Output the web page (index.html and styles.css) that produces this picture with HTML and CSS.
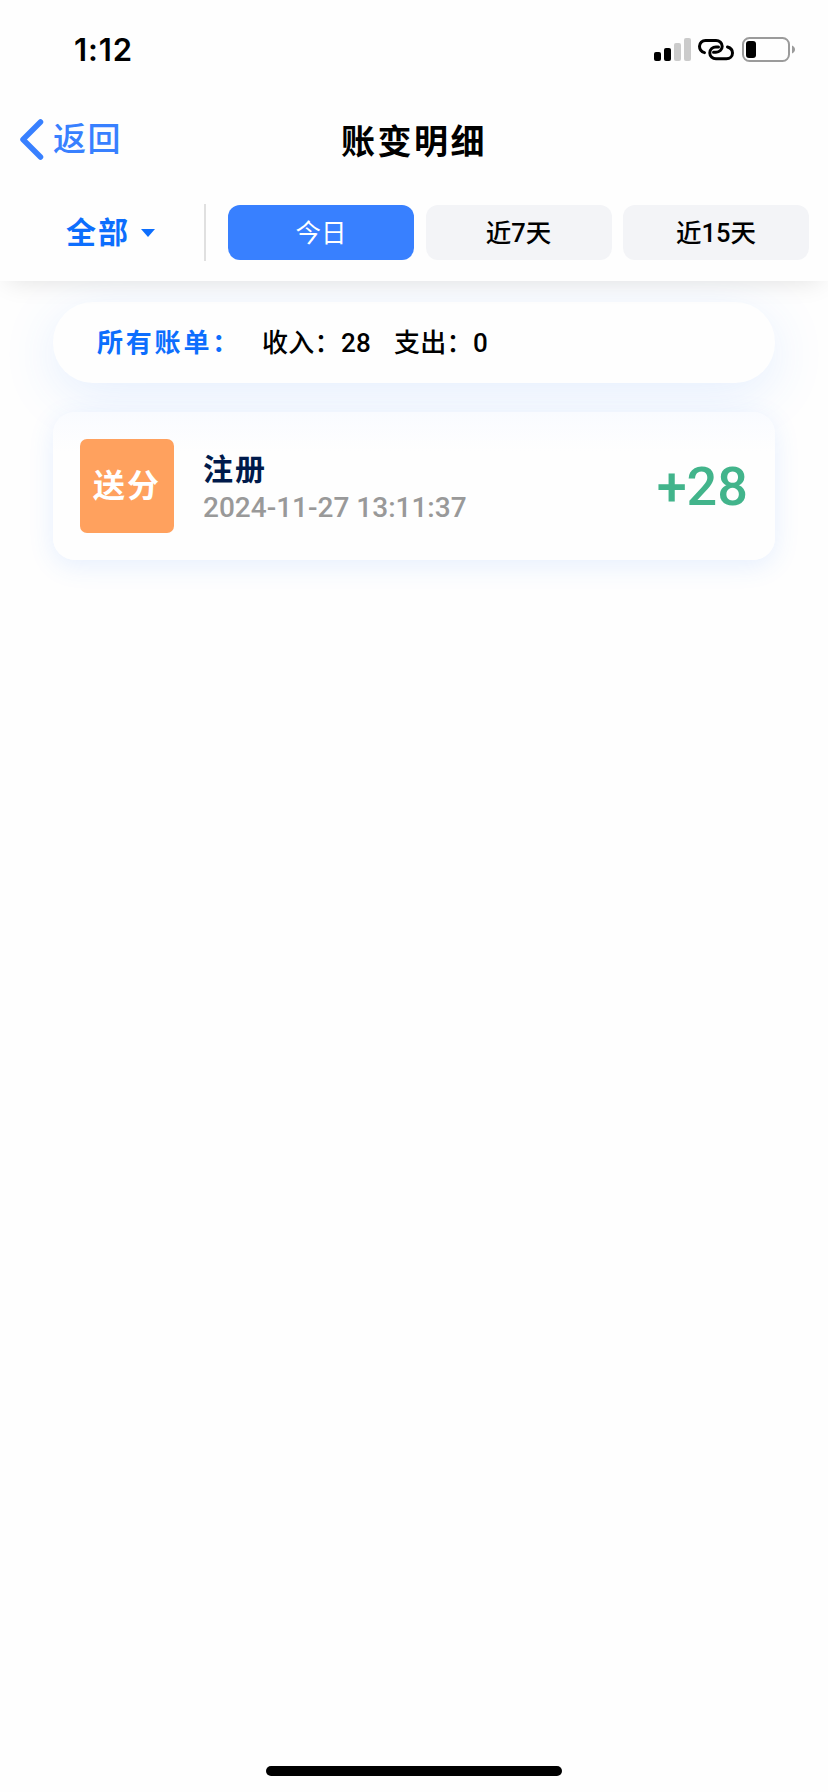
FILE: index.html
```html
<!DOCTYPE html>
<html lang="zh-CN">
<head>
    <meta charset="UTF-8">
    <meta name="viewport" content="width=device-width, initial-scale=1.0">
    <title>账变明细</title>
    <link rel="stylesheet" href="styles.css">
</head>
<body>
    <div class="page">
        <header class="header">
            <div class="status-bar">
                <span class="time">1:12</span>
                <svg class="status-icons" width="144" height="30" viewBox="0 0 144 30">
                    <!-- signal -->
                    <rect x="3" y="17" width="7" height="9" rx="2"/>
                    <rect x="13" y="13" width="7" height="13" rx="2"/>
                    <rect x="23" y="8" width="7" height="18" rx="2" fill="#cbcbcb"/>
                    <rect x="33" y="3" width="7" height="23" rx="2" fill="#cbcbcb"/>
                    <!-- hotspot link -->
                    <g fill="none" stroke="#000" stroke-width="3" stroke-linecap="round">
                        <path d="M53.5 17.6C50.5 16.8 48.5 14.2 48.5 11.3C48.5 8 51.3 5.4 54.6 5.4H65C68.4 5.4 71.2 8 71.2 11.3C71.2 14.6 68.4 17.2 65 17.2H62.5"/>
                        <path d="M76.5 12C79.5 12.8 81.5 15.2 81.5 18C81.5 21.4 78.7 23.8 75.4 23.8H65C61.6 23.8 58.8 21.4 58.8 18C58.8 14.4 61.6 12 65 12H67.5"/>
                    </g>
                    <!-- battery -->
                    <rect x="92" y="3" width="46" height="23" rx="6.5" fill="none" stroke="#9b9b9b" stroke-width="2"/>
                    <rect x="95" y="6" width="10" height="17" rx="3"/>
                    <path d="M141 10.5C145 12 145 17 141 18.5Z" fill="#9b9b9b"/>
                </svg>
            </div>
            <div class="nav">
                <a class="back">
                    <svg width="26" height="44" viewBox="0 0 26 44">
                        <path d="M22.5 4L5 21.5L22.5 39" fill="none" stroke="#3880ff" stroke-width="5.5" stroke-linecap="round" stroke-linejoin="round"/>
                    </svg>
                    <span>返回</span>
                </a>
                <h1 class="title">账变明细</h1>
            </div>
            <div class="filters">
                <div class="type">
                    <span>全部</span>
                    <i class="caret"></i>
                </div>
                <div class="days">
                    <button class="day active">今日</button>
                    <button class="day">近7天</button>
                    <button class="day">近15天</button>
                </div>
            </div>
        </header>

        <main class="content">
            <div class="summary">
                <span class="label">所有账单：</span>
                <span class="income">收入：28</span>
                <span class="outcome">支出：0</span>
            </div>
            <div class="record">
                <div class="tag">送分</div>
                <div class="info">
                    <div class="name">注册</div>
                    <div class="date">2024-11-27 13:11:37</div>
                </div>
                <div class="amount">+28</div>
            </div>
        </main>

        <div class="home-bar"></div>
    </div>
</body>
</html>
```

FILE: styles.css
```css
* {
    box-sizing: border-box;
}
body {
    margin: 0;
    background: #fefefe;
    color: #000;
    font-family: Roboto, "Noto Sans CJK SC", sans-serif;
}
.page {
    display: flex;
    flex-direction: column;
    height: 1792px;
    overflow: hidden;
}
.header {
    position: relative;
    z-index: 1;
    height: 281px;
    background: #fefefe;
    box-shadow: 0 8px 24px -8px rgba(0, 0, 0, 0.12);
}
.status-bar {
    display: flex;
    justify-content: space-between;
    height: 100px;
    padding: 35px 33px 0 74px;
}
.time {
    font-family: Inter, sans-serif;
    font-size: 31px;
    font-weight: 600;
    line-height: 30px;
    letter-spacing: 0.9px;
}
.nav {
    display: grid;
    grid-template-columns: 1fr auto 1fr;
    align-items: center;
    height: 80px;
    padding: 0 18px;
}
.back {
    display: flex;
    align-items: center;
    gap: 9px;
    color: #3880ff;
    font-size: 33px;
    font-weight: 500;
    line-height: 44px;
    letter-spacing: 1.5px;
}
.title {
    margin: 0;
    padding-top: 4px;
    font-size: 34px;
    font-weight: 700;
    line-height: 44px;
    letter-spacing: 2.5px;
}
.filters {
    display: flex;
    align-items: center;
    height: 101px;
    padding: 3px 19px 0 0;
}
.type {
    display: flex;
    align-items: center;
    gap: 11px;
    width: 206px;
    height: 57px;
    padding: 1px 0 0 66px;
    border-right: 2px solid #e0e0e0;
    color: #0d6efd;
    font-size: 30px;
    font-weight: 700;
    line-height: 44px;
    letter-spacing: 2px;
}
.caret {
    margin-top: 1px;
    border: 7.5px solid transparent;
    border-top: 8px solid #0d6efd;
    border-bottom: 0;
}
.days {
    display: flex;
    flex: 1;
    gap: 11.5px;
    margin-left: 22px;
}
.day {
    flex: 1;
    height: 55px;
    padding: 2px 0 0;
    border: none;
    border-radius: 12px;
    background: #f3f4f7;
    color: #000;
    font-family: inherit;
    font-size: 25.5px;
    font-weight: 500;
    line-height: 53px;
}
.day.active {
    background: #3880ff;
    color: #fff;
    font-weight: 400;
}
.content {
    display: flex;
    flex-direction: column;
    gap: 29px;
    padding: 21px 53px 0;
}
.summary {
    display: flex;
    align-items: center;
    height: 81px;
    padding: 0 0 4px 44px;
    border-radius: 40px;
    background: #fefefe;
    box-shadow: 0 12px 54px rgba(56, 128, 255, 0.13);
    font-size: 26px;
    font-weight: 500;
    letter-spacing: 0.3px;
}
.label {
    width: 165px;
    color: #0d6efd;
    font-weight: 700;
    letter-spacing: 2.8px;
}
.income {
    width: 132px;
}
.record {
    display: flex;
    align-items: center;
    height: 148px;
    padding: 0 27px;
    border-radius: 22px;
    background: linear-gradient(#f9fbff, #fefefe 40px);
    box-shadow: 0 6px 26px rgba(56, 128, 255, 0.12);
}
.tag {
    width: 94px;
    height: 94px;
    border-radius: 7px;
    background: #ffa15e;
    color: #fff;
    font-size: 32px;
    font-weight: 700;
    line-height: 94px;
    letter-spacing: 2px;
    text-align: center;
}
.info {
    flex: 1;
    margin-left: 29px;
    padding-top: 4px;
}
.name {
    color: #001a4b;
    font-size: 30px;
    font-weight: 700;
    line-height: 40px;
    letter-spacing: 2px;
}
.date {
    color: #999;
    font-size: 28px;
    font-weight: 500;
    line-height: 36px;
}
.amount {
    color: #42b48b;
    font-size: 54px;
    font-weight: 500;
}
.home-bar {
    width: 296px;
    height: 10px;
    margin: auto auto 16px;
    border-radius: 5px;
    background: #000;
}
```
